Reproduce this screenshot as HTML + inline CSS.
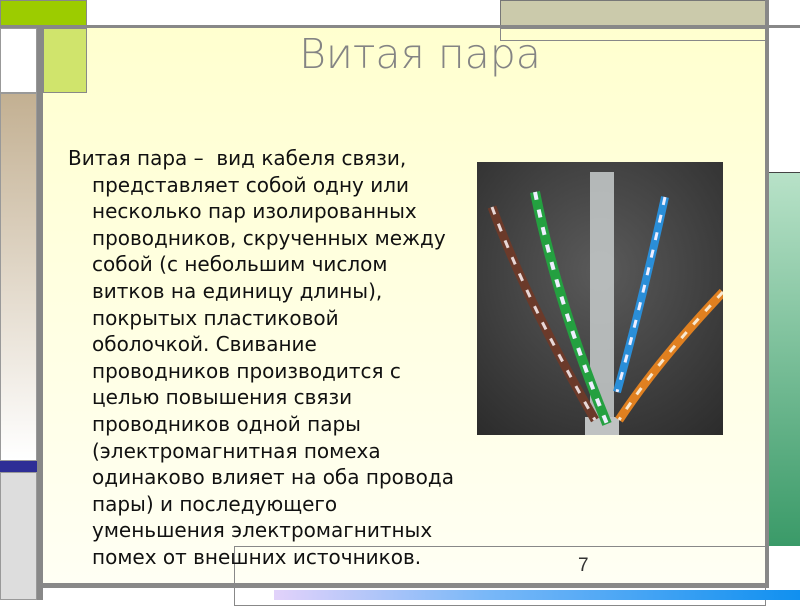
<!DOCTYPE html>
<html><head><meta charset="utf-8"><style>
*{margin:0;padding:0;box-sizing:border-box}
body{width:800px;height:600px;position:relative;overflow:hidden;background:#fff;font-family:"DejaVu Sans","Liberation Sans",sans-serif}
.a{position:absolute}
.t{position:absolute;left:92px;white-space:nowrap;font-size:20px;color:#111;line-height:26px}
</style></head><body>
<div class="a" style="left:0;top:0;width:87px;height:26px;background:#9ccc00;border:1px solid #888"></div>
<div class="a" style="left:500px;top:0;width:266px;height:26px;background:#cbcaab;border:1px solid #777"></div>
<div class="a" style="left:0;top:25px;width:800px;height:3px;background:#888"></div>
<div class="a" style="left:0;top:28px;width:37px;height:65px;background:#fff;border:1px solid #999"></div>
<div class="a" style="left:0;top:93px;width:37px;height:368px;background:linear-gradient(#c3b092,#fff);border:1px solid #999"></div>
<div class="a" style="left:0;top:461px;width:37px;height:11px;background:#2e2e96"></div>
<div class="a" style="left:0;top:472px;width:37px;height:128px;background:#ddd;border:1px solid #999"></div>
<div class="a" style="left:37px;top:25px;width:6px;height:575px;background:#888"></div>
<div class="a" style="left:43px;top:28px;width:722px;height:555px;background:linear-gradient(#ffffcf,#fffff4)"></div>
<div class="a" style="left:43px;top:28px;width:44px;height:65px;background:#d0e46c;border:1px solid #888"></div>
<div class="a" style="left:500px;top:28px;width:266px;height:13px;border:1px solid #888"></div>
<div class="a" style="left:765px;top:0;width:4px;height:588px;background:#888"></div>
<div class="a" style="left:769px;top:28px;width:31px;height:145px;background:#fff;border-bottom:1px solid #444"></div>
<div class="a" style="left:769px;top:173px;width:31px;height:373px;background:linear-gradient(#b8e2c8,#3a9a68)"></div>
<div class="a" style="left:234px;top:546px;width:532px;height:60px;border:1px solid #888"></div>
<div class="a" style="left:43px;top:583px;width:725px;height:5px;background:#888"></div>
<div class="a" style="left:274px;top:590px;width:526px;height:10px;background:linear-gradient(90deg,#e2d2fa,#7ab8f8 40%,#1090f0)"></div>
<div class="a" style="left:0;top:30px;width:840px;text-align:center;font-family:'DejaVu Sans',sans-serif;font-size:41px;color:#848484;font-weight:300">Витая пара</div>
<div class="a" style="left:578px;top:555px;font-size:19px;color:#333;font-family:'Liberation Sans',sans-serif">7</div>
<svg class="a" style="left:477px;top:162px" width="246" height="273" viewBox="0 0 246 273">
<defs><radialGradient id="g" cx=".5" cy=".4" r=".8"><stop offset="0" stop-color="#5a5a5a"/><stop offset="1" stop-color="#2a2a2a"/></radialGradient></defs>
<rect width="246" height="273" fill="url(#g)"/>
<rect x="113" y="10" width="24" height="250" fill="#c8cccc" opacity=".85"/>
<rect x="108" y="255" width="34" height="18" fill="#bfc2c2"/>
<path d="M15 45 Q50 140 118 258" stroke="#6b3a2a" stroke-width="9" fill="none"/>
<path d="M15 45 Q50 140 118 258" stroke="#e8d8d8" stroke-width="3" stroke-dasharray="8 10" fill="none"/>
<path d="M58 30 Q80 140 130 262" stroke="#24a040" stroke-width="10" fill="none"/>
<path d="M58 30 Q80 140 130 262" stroke="#eef" stroke-width="4" stroke-dasharray="8 10" fill="none"/>
<path d="M188 35 Q165 140 140 230" stroke="#2a8ed8" stroke-width="8" fill="none"/>
<path d="M188 35 Q165 140 140 230" stroke="#eef" stroke-width="3" stroke-dasharray="8 10" fill="none"/>
<path d="M246 130 Q180 200 142 258" stroke="#e08020" stroke-width="9" fill="none"/>
<path d="M246 130 Q180 200 142 258" stroke="#f8e8d0" stroke-width="3" stroke-dasharray="8 10" fill="none"/>
</svg>
<div class="t" style="top:145px;left:68px">Витая пара –&nbsp; вид кабеля связи,</div>
<div class="t" style="top:171.6px">представляет собой одну или</div>
<div class="t" style="top:198.2px">несколько пар изолированных</div>
<div class="t" style="top:224.8px">проводников, скрученных между</div>
<div class="t" style="top:251.4px">собой (с небольшим числом</div>
<div class="t" style="top:278px">витков на единицу длины),</div>
<div class="t" style="top:304.6px">покрытых пластиковой</div>
<div class="t" style="top:331.2px">оболочкой. Свивание</div>
<div class="t" style="top:357.8px">проводников производится с</div>
<div class="t" style="top:384.4px">целью повышения связи</div>
<div class="t" style="top:411px">проводников одной пары</div>
<div class="t" style="top:437.6px">(электромагнитная помеха</div>
<div class="t" style="top:464.2px">одинаково влияет на оба провода</div>
<div class="t" style="top:490.8px">пары) и последующего</div>
<div class="t" style="top:517.4px">уменьшения электромагнитных</div>
<div class="t" style="top:544px">помех от внешних источников.</div>
</body></html>
